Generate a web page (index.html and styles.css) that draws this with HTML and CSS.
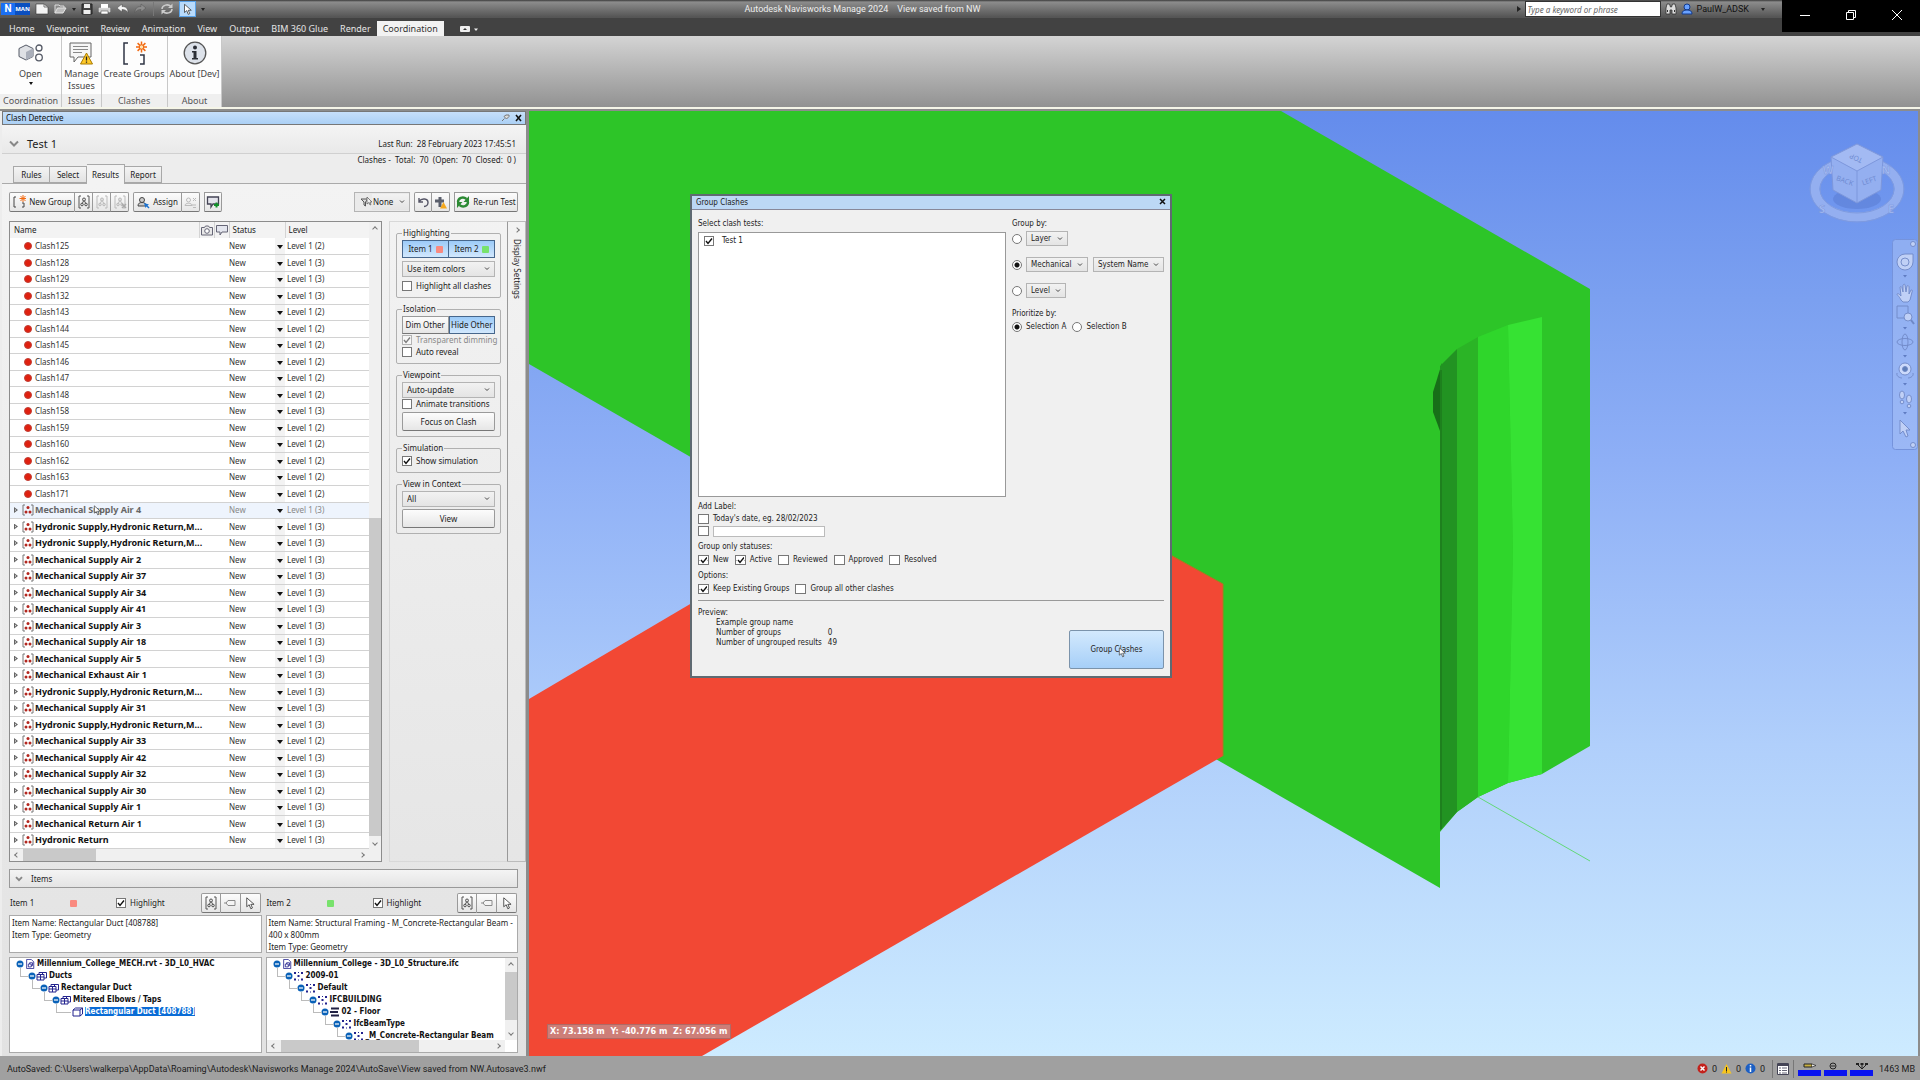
FILE: index.html
```html
<!DOCTYPE html>
<html lang="en">
<head>
    <meta charset="UTF-8">
    <meta name="viewport" content="width=device-width, initial-scale=1.0">
    <title>Autodesk Navisworks Manage 2024</title>
    <link rel="stylesheet" href="styles.css">
</head>
<body>
    <!-- icons used more than once -->
    <svg class="defs" width="0" height="0">
        <symbol id="i-group" viewBox="0 0 12 12">
            <path d="M3 1H1v10h2M9 1h2v10H9" fill="none" stroke="#777" stroke-width="1"/>
            <circle cx="6" cy="3.600" r="1.500" fill="#b3261e"/><circle cx="4" cy="8" r="1.500" fill="#b3261e"/><circle cx="8" cy="8" r="1.500" fill="#b3261e"/>
        </symbol>
        <symbol id="i-bracket" viewBox="0 0 14 14">
            <path d="M4 1H2v12h2M10 1h2v12h-2" fill="none" stroke="currentColor"/>
            <path d="M7 5L5 9M7 5l2 4" stroke="currentColor"/>
            <circle cx="7" cy="4.500" r="1.500" fill="#ddd" stroke="currentColor"/><circle cx="5" cy="9.500" r="1.300" fill="#ddd" stroke="currentColor"/><circle cx="9" cy="9.500" r="1.300" fill="#ddd" stroke="currentColor"/>
        </symbol>
        <symbol id="i-tag" viewBox="0 0 14 14">
            <path d="M5 4.500h7v5H5L3 7z" fill="#f4f4f4" stroke="#8a8a8a"/><path d="M1 7h3" stroke="#8a8a8a"/>
        </symbol>
        <symbol id="i-arrow" viewBox="0 0 12 16">
            <path d="M2 1v11l3-2.500 2 5 2-1-2-4.500h4z" fill="#fff" stroke="#333"/>
        </symbol>
        <symbol id="i-minus" viewBox="0 0 8 8">
            <circle cx="4" cy="4" r="3.500" fill="#0a62b8"/><path d="M2 4h4" stroke="#fff" stroke-width="1.200"/>
        </symbol>
        <symbol id="i-file" viewBox="0 0 10 12">
            <path d="M1 .5h5.500l3 3v8H1z" fill="#fff" stroke="#23238e"/><path d="M3 6h3.500v3.500H3zM4.500 6V4.500H8V8H6.500" fill="none" stroke="#23238e"/>
        </symbol>
        <symbol id="i-cubes" viewBox="0 0 12 10">
            <path d="M1 3.500h7v5.500H1zM1 6h7M4.500 3.500V9M3 3.500V1.500h7.500v5.500H8M6.500 1.500v2" fill="none" stroke="#23238e"/>
        </symbol>
        <symbol id="i-cube" viewBox="0 0 12 10">
            <path d="M1 3h7v6H1zM1 3l2.500-2h7L8 3M10.500 1v6L8 9" fill="#fff" stroke="#23238e"/>
        </symbol>
        <symbol id="i-dots" viewBox="0 0 12 10">
            <path d="M1 1h2v2H1zM8 1h2v2H8zM4.500 4h2v2h-2zM1 7.500h2v2H1zM8 7.500h2v2H8zM5 1h1v1H5zM5 8.500h1v1H5z" fill="#23238e"/>
        </symbol>
        <symbol id="i-floor" viewBox="0 0 12 10">
            <path d="M2 1.500h8M1 5h8M2 8.500h8" stroke="#222244" stroke-width="2"/>
        </symbol>
    </svg>

    <header class="titlebar">
        <div class="quick">
            <span class="logo"><b>N</b><i>MAN</i></span>
            <svg width="14" height="12" viewBox="0 0 14 12"><path d="M1 1h8l4 3v7H1z" fill="#f4f4f4" stroke="#333" stroke-width=".6"/><path d="M9 1v3h4" fill="none" stroke="#777"/></svg>
            <svg width="13" height="12" viewBox="0 0 13 12"><path d="M1 10V2h4l1 1h4v2" fill="#888" stroke="#ddd"/><path d="M1 10l2.500-5H12l-3 5z" fill="#bbb" stroke="#e4e4e4"/></svg>
            <span class="caret dark"></span>
            <svg width="12" height="12" viewBox="0 0 12 12"><path d="M1 1h10v10H1z" fill="#444" stroke="#222"/><path d="M3 1h6v4H3zM2.500 7h7v4h-7z" fill="#eee"/></svg>
            <svg width="13" height="12" viewBox="0 0 13 12"><path d="M3 1h7v4H3z" fill="#fff"/><path d="M1 5h11v4H1z" fill="#ccc" stroke="#eee" stroke-width=".5"/><path d="M3 8h7v3H3z" fill="#fff" stroke="#555" stroke-width=".6"/></svg>
            <svg width="13" height="12" viewBox="0 0 13 12"><path d="M6 1v2.500c4 0 6 2 6 6-1.500-2-3-3-6-3V9L1 5z" fill="#f4f4f4" stroke="#444" stroke-width=".5"/></svg>
            <svg width="13" height="12" viewBox="0 0 13 12"><path d="M7 1v2.500c-4 0-6 2-6 6 1.500-2 3-3 6-3V9l5-4z" fill="#8d8d8d" stroke="#555" stroke-width=".5"/></svg>
            <span class="vsep"></span>
            <svg width="14" height="12" viewBox="0 0 14 12"><path d="M2 6c0-4 6-5.500 9-2.500M12 6c0 4-6 5.500-9 2.500" fill="none" stroke="#ccc" stroke-width="1.500"/><path d="M12.500.5v4.500H8zM1.500 11.500V7H6z" fill="#ccc"/></svg>
            <span class="pick"><svg width="9" height="13" viewBox="0 0 12 16"><use href="#i-arrow"/></svg></span>
            <span class="caret dark"></span>
        </div>
        <div class="app-name">Autodesk Navisworks Manage 2024 &nbsp;&nbsp; View saved from NW</div>
        <div class="account">
            <span class="play"></span>
            <input type="text" class="search" placeholder="Type a keyword or phrase" aria-label="Search">
            <svg width="12" height="12" viewBox="0 0 12 12"><path d="M1 5l1-4h2.500l1 3h1l1-3H10l1 4v6H7V7H5v4H1z" fill="#ddd" stroke="#333" stroke-width=".8"/><path d="M2.500 7v2M9.500 7v2" stroke="#333"/></svg>
            <svg width="12" height="12" viewBox="0 0 12 12"><circle cx="6" cy="4" r="3" fill="#6aa2ff" stroke="#123a8c"/><path d="M1 11c0-3 2-4 5-4s5 1 5 4z" fill="#6aa2ff" stroke="#123a8c"/></svg>
            <span class="user">PaulW_ADSK</span>
            <span class="caret dark"></span>
        </div>
    </header>
    <nav class="tabs">
        <a href="#">Home</a>
        <a href="#">Viewpoint</a>
        <a href="#">Review</a>
        <a href="#">Animation</a>
        <a href="#">View</a>
        <a href="#">Output</a>
        <a href="#">BIM 360 Glue</a>
        <a href="#">Render</a>
        <a href="#" class="active">Coordination</a>
        <svg width="20" height="8" viewBox="0 0 20 8"><rect x="0" y="1" width="10" height="6" rx="1" fill="#eee"/><path d="M3 5l2-2 2 2z" fill="#333"/><path d="M14 3.500h4l-2 2.500z" fill="#eee"/></svg>
    </nav>
    <div class="win-btns">
        <button aria-label="Minimize"><svg width="12" height="12" viewBox="0 0 12 12"><path d="M1 6.500h10" stroke="#fff"/></svg></button>
        <button aria-label="Restore"><svg width="12" height="12" viewBox="0 0 12 12"><path d="M1.500 3.500h7v7h-7zM3.500 3.500v-2h7v7h-2" fill="none" stroke="#fff"/></svg></button>
        <button aria-label="Close"><svg width="12" height="12" viewBox="0 0 12 12"><path d="M1 1l10 10M11 1L1 11" stroke="#fff"/></svg></button>
    </div>

    <div class="ribbon">
        <div class="rgroup">
            <button>
                <svg width="26" height="24" viewBox="0 0 26 24"><path d="M8 4l7 3.500v8L8 19l-7-3.500v-8z" fill="#dfe1e5" stroke="#555a66"/><path d="M8 11v8l7-3.500v-8z" fill="#aaafba"/><circle cx="21" cy="7" r="3" fill="#fff" stroke="#555a66" stroke-width="1.300"/><circle cx="21" cy="16.500" r="3.300" fill="#fff" stroke="#555a66" stroke-width="1.300"/></svg>
                Open<span class="caret"></span>
            </button>
            <h6>Coordination</h6>
        </div>
        <div class="rgroup">
            <button>
                <svg width="26" height="24" viewBox="0 0 26 24"><path d="M2 2h21v14H10l-4 5v-5H2z" fill="#f6f6f6" stroke="#666"/><path d="M5 5.500h15M5 8.500h15M5 11.500h9" stroke="#888"/><path d="M18.500 12l6 11h-12z" fill="#ffc928" stroke="#a97b00"/><path d="M18.500 15.500v4M18.500 20.500v1.300" stroke="#222" stroke-width="1.300"/></svg>
                <span>Manage<br>Issues</span>
            </button>
            <h6>Issues</h6>
        </div>
        <div class="rgroup">
            <button>
                <svg width="26" height="24" viewBox="0 0 26 24"><path d="M7 2H3v21h4M19 14h4v9h-4" fill="none" stroke="#2f3544" stroke-width="1.500"/><path d="M20.500.5v11M15 6h11M16.600 2.100l7.800 7.800M24.400 2.100l-7.800 7.800" stroke="#f26a12" stroke-width="1.500"/><circle cx="20.500" cy="6" r="2.200" fill="#ffe3b0" stroke="#f26a12"/></svg>
                Create Groups
            </button>
            <h6>Clashes</h6>
        </div>
        <div class="rgroup">
            <button>
                <svg width="26" height="24" viewBox="0 0 26 24"><circle cx="13" cy="12" r="10.800" fill="#dde2ea" stroke="#555" stroke-width="1.300"/><circle cx="13" cy="6.500" r="2" fill="#2b2e35"/><path d="M10 10h4.500v7H16v1.500h-6V17h1.500v-5.500H10z" fill="#2b2e35"/></svg>
                About [Dev]
            </button>
            <h6>About</h6>
        </div>
    </div>

    <main>
        <section class="panel">
            <div class="panel-title">
                <span>Clash Detective</span>
                <svg width="22" height="8" viewBox="0 0 22 8"><path d="M1 7l2.500-2.500M3 2.500L5.500 5 8 2.500V1H5z" fill="#ddd" stroke="#777"/><path d="M15 1l5 6M20 1l-5 6" stroke="#111" stroke-width="1.600"/></svg>
            </div>
            <div class="test-head">
                <svg width="10" height="8" viewBox="0 0 10 8"><path d="M1 1.500l4 4 4-4" fill="none" stroke="#888" stroke-width="2"/></svg>
                <span class="test-name">Test 1</span>
                <span class="last-run">Last Run: &nbsp;28 February 2023 17:45:51</span>
            </div>
            <div class="sum">Clashes - &nbsp;Total: &nbsp;70 &nbsp;(Open: &nbsp;70 &nbsp;Closed: &nbsp;0 )</div>
            <div class="ptabs">
                <button>Rules</button><button>Select</button><button class="active">Results</button><button>Report</button>
            </div>
            <div class="pbody">
                <div class="toolbar">
                    <div class="bgroup">
                        <button class="b-new"><svg width="14" height="14" viewBox="0 0 14 14"><path d="M4 2H2v10h2M10 8h2v4h-2" fill="none" stroke="#444"/><path d="M11 0v7M7.500 3.500h7M8.500 1l5 5M13.500 1l-5 5" stroke="#f26a12"/></svg>New Group</button>
                        <button class="ico" aria-label="Group"><svg width="14" height="14"><use href="#i-bracket"/></svg></button>
                        <button class="ico dim" aria-label="Add to group"><svg width="14" height="14"><use href="#i-bracket"/></svg></button>
                        <button class="ico dim" aria-label="Remove from group"><svg width="14" height="14" viewBox="0 0 14 14"><use href="#i-bracket"/><path d="M9 9l4 4M13 9l-4 4" stroke="#aaa" stroke-width="1.500"/></svg></button>
                    </div>
                    <div class="bgroup">
                        <button class="b-assign"><svg width="13" height="13" viewBox="0 0 13 13"><circle cx="5" cy="4" r="2.500" fill="#ccc" stroke="#444"/><path d="M1 10c0-3 2-3.500 4-3.500S9 7 9 10z" fill="#ccc" stroke="#444"/><path d="M7 7l1.500 5 1-1.500 2 2 1-1-2-2L12 8.500z" fill="#1b72d0"/></svg>Assign</button>
                        <button class="ico dim" aria-label="Unassign"><svg width="13" height="13" viewBox="0 0 13 13"><circle cx="4.500" cy="4" r="2" fill="none" stroke="currentColor"/><path d="M1 9.500c0-3 7-3 7 0zM9 2l3 3M12 2L9 5M8 9h4M9 11.500h3" fill="none" stroke="currentColor"/></svg></button>
                    </div>
                    <div class="bgroup">
                        <button class="ico" aria-label="Add comment"><svg width="14" height="14" viewBox="0 0 14 14"><path d="M1.500 2h11v7H7l-2 3V9H1.500z" fill="#e4e4ec" stroke="#445" stroke-width="1.300"/><path d="M10.500 7.500v5M8 10h5" stroke="#13912b" stroke-width="2"/></svg></button>
                    </div>
                    <span class="grow"></span>
                    <div class="filter">
                        <svg width="12" height="12" viewBox="0 0 12 12"><path d="M1 3h7L5.500 6v4L4 9V6z" fill="#ddd" stroke="#555"/><path d="M7 1v7l2-1.500L10 9l1-.5-1-2.500h2z" fill="#eee" stroke="#555" stroke-width=".7"/></svg>
                        <select aria-label="Filter"><option>None</option></select>
                    </div>
                    <div class="bgroup">
                        <button class="ico" aria-label="Reset"><svg width="13" height="13" viewBox="0 0 13 13"><path d="M2 2v4h4M2 5.500c3-4 9-3 9 1 0 2-1.500 4-4 4" fill="none" stroke="#556" stroke-width="1.400"/></svg></button>
                        <button class="ico" aria-label="Compact"><svg width="13" height="13" viewBox="0 0 13 13"><path d="M6 1v10M1 5h9" stroke="#5a5f6c" stroke-width="3"/><path d="M9.500 6l3.500 6.500H6z" fill="#f5a81c"/></svg></button>
                    </div>
                    <div class="bgroup">
                        <button class="b-rerun"><svg width="14" height="14" viewBox="0 0 14 14"><path d="M2 7c0-4 5-6 8.500-3M12 7c0 4-5 6-8.500 3" fill="none" stroke="#2c8a34" stroke-width="2.400"/><path d="M13 1v6H7.500zM1 13V7h5.500z" fill="#2c8a34"/></svg>Re-run Test</button>
                    </div>
                </div>

                <div class="work">
                    <div class="grid">
                        <div class="grid-main">
                            <table>
                                <thead>
                                    <tr>
                                        <th class="c-name">Name</th>
                                        <th class="c-ico"><svg width="12" height="11" viewBox="0 0 12 11"><path d="M.5 2.500h3l1-1.500h3l1 1.500h3v7.500H.5z" fill="#e8e8e8" stroke="#667"/><circle cx="6" cy="6" r="2.300" fill="#fff" stroke="#667"/></svg></th>
                                        <th class="c-ico"><svg width="12" height="11" viewBox="0 0 12 11"><path d="M.5.5h11v6.500H6L4 10V7H.5z" fill="#e4e6ee" stroke="#667"/></svg></th>
                                        <th class="c-status">Status</th>
                                        <th class="c-dd"></th>
                                        <th class="c-level">Level</th>
                                    </tr>
                                </thead>
                                <tbody id="rows"></tbody>
                            </table>
                            <div class="hbar"><span class="chev left"></span><i></i><span class="chev right"></span></div>
                        </div>
                        <div class="vbar"><span class="chev up"></span><i></i><span class="chev down"></span></div>
                    </div>

                    <div class="options">
                        <fieldset>
                            <legend>Highlighting</legend>
                            <div class="pair"><button class="on">Item 1 <i class="sw red"></i></button><button class="on">Item 2 <i class="sw green"></i></button></div>
                            <select aria-label="Colors"><option>Use item colors</option></select>
                            <label class="last"><input type="checkbox">Highlight all clashes</label>
                        </fieldset>
                        <fieldset>
                            <legend>Isolation</legend>
                            <div class="pair"><button>Dim Other</button><button class="on">Hide Other</button></div>
                            <label class="off"><input type="checkbox" checked disabled>Transparent dimming</label>
                            <label><input type="checkbox">Auto reveal</label>
                        </fieldset>
                        <fieldset>
                            <legend>Viewpoint</legend>
                            <select aria-label="Viewpoint"><option>Auto-update</option></select>
                            <label><input type="checkbox">Animate transitions</label>
                            <button class="wide">Focus on Clash</button>
                        </fieldset>
                        <fieldset>
                            <legend>Simulation</legend>
                            <label><input type="checkbox" checked>Show simulation</label>
                        </fieldset>
                        <fieldset>
                            <legend>View in Context</legend>
                            <select aria-label="Context"><option>All</option></select>
                            <button class="wide">View</button>
                        </fieldset>
                    </div>
                    <div class="side-tab"><span class="chev right"></span><span class="vert">Display Settings</span></div>
                </div>

                <div class="items-head"><svg width="8" height="6" viewBox="0 0 10 8"><path d="M1 1.500l4 4 4-4" fill="none" stroke="#888" stroke-width="2.500"/></svg>Items</div>
                <div class="items">
                    <div class="item">
                        <div class="item-bar">
                            <span class="nm">Item 1</span><i class="sw red"></i>
                            <label><input type="checkbox" checked>Highlight</label>
                            <div class="bgroup">
                                <button class="ico" aria-label="Group"><svg width="14" height="14"><use href="#i-bracket"/></svg></button>
                                <button class="ico" aria-label="Back"><svg width="14" height="14"><use href="#i-tag"/></svg></button>
                                <button class="ico" aria-label="Select"><svg width="10" height="13"><use href="#i-arrow"/></svg></button>
                            </div>
                        </div>
                        <div class="info">Item Name: Rectangular Duct [408788]<br>Item Type: Geometry</div>
                        <div class="treebox">
                            <ul class="tree">
                                <li><svg class="m"><use href="#i-minus"/></svg><svg><use href="#i-file"/></svg>Millennium_College_MECH.rvt - 3D_L0_HVAC
                                <ul><li><svg class="m"><use href="#i-minus"/></svg><svg><use href="#i-cubes"/></svg>Ducts
                                <ul><li><svg class="m"><use href="#i-minus"/></svg><svg><use href="#i-cubes"/></svg>Rectangular Duct
                                <ul><li><svg class="m"><use href="#i-minus"/></svg><svg><use href="#i-cubes"/></svg>Mitered Elbows / Taps
                                <ul><li class="leaf"><svg><use href="#i-cube"/></svg><span class="sel">Rectangular Duct [408788]</span></li></ul>
                                </li></ul></li></ul></li></ul></li>
                            </ul>
                        </div>
                    </div>
                    <div class="item">
                        <div class="item-bar">
                            <span class="nm">Item 2</span><i class="sw green"></i>
                            <label><input type="checkbox" checked>Highlight</label>
                            <div class="bgroup">
                                <button class="ico" aria-label="Group"><svg width="14" height="14"><use href="#i-bracket"/></svg></button>
                                <button class="ico" aria-label="Back"><svg width="14" height="14"><use href="#i-tag"/></svg></button>
                                <button class="ico" aria-label="Select"><svg width="10" height="13"><use href="#i-arrow"/></svg></button>
                            </div>
                        </div>
                        <div class="info">Item Name: Structural Framing - M_Concrete-Rectangular Beam - 400 x 800mm<br>Item Type: Geometry</div>
                        <div class="treebox scroll">
                            <ul class="tree">
                                <li><svg class="m"><use href="#i-minus"/></svg><svg><use href="#i-file"/></svg>Millennium_College - 3D_L0_Structure.ifc
                                <ul><li><svg class="m"><use href="#i-minus"/></svg><svg><use href="#i-dots"/></svg>2009-01
                                <ul><li><svg class="m"><use href="#i-minus"/></svg><svg><use href="#i-dots"/></svg>Default
                                <ul><li><svg class="m"><use href="#i-minus"/></svg><svg><use href="#i-dots"/></svg>IFCBUILDING
                                <ul><li><svg class="m"><use href="#i-minus"/></svg><svg><use href="#i-floor"/></svg>02 - Floor
                                <ul><li><svg class="m"><use href="#i-minus"/></svg><svg><use href="#i-dots"/></svg>IfcBeamType
                                <ul><li><svg class="m"><use href="#i-minus"/></svg><svg><use href="#i-dots"/></svg>_M_Concrete-Rectangular Beam</li></ul>
                                </li></ul></li></ul></li></ul></li></ul></li></ul></li>
                            </ul>
                            <div class="vbar"><span class="chev up"></span><i></i><span class="chev down"></span></div>
                            <div class="hbar"><span class="chev left"></span><i></i><span class="chev right"></span></div>
                        </div>
                    </div>
                </div>
            </div>
        </section>

        <section class="view">
            <svg class="scene" viewBox="529 111 1389 945" preserveAspectRatio="xMinYMin slice">
                <path d="M529 111H1281L1590 289V746L1542 774L1508 783L1478 797L1457 812L1440 832V888L529 364z" fill="#2dc528"/>
                <path d="M1442 363V431L1440 431L1433 412V392z" fill="#176f18"/>
                <path d="M1440 366L1457 349V812L1440 831z" fill="#229322"/>
                <path d="M1441 370V829" stroke="#1a6e1a"/>
                <path d="M1457 349L1478 337V797L1457 812z" fill="#2bb426"/>
                <path d="M1478 337L1508 325L1513 550L1508 783L1478 797z" fill="#2fd62b"/>
                <path d="M1508 325L1542 317V774L1508 783L1513 550z" fill="#36e233"/>
                <path d="M1478 797L1590 861" stroke="#62d878" stroke-width="1"/>
                <path d="M529 699L967 441L1223 584V756L702 1056H529z" fill="#f24834"/>
                <path d="M1172 556L1223 584V756" fill="none" stroke="#b0761f"/>
            </svg>

            <svg class="viewcube" width="100" height="86" viewBox="0 0 100 86">
                <ellipse cx="50" cy="50" rx="42" ry="28" fill="none" stroke="#94aff0" stroke-width="9"/>
                <ellipse cx="50" cy="50" rx="47" ry="33" fill="none" stroke="#7f9be0"/>
                <ellipse cx="50" cy="50" rx="37" ry="24" fill="none" stroke="#7f9be0"/>
                <ellipse cx="50" cy="60" rx="24" ry="10" fill="#5c7fd6" opacity=".6"/>
                <path d="M50 5l26 13-2 33-24 13-24-13-2-33z" fill="#94aff0" stroke="#7d97dc"/>
                <path d="M50 5l26 13-26 14-26-14z" fill="#a3baf3" stroke="#7d97dc"/>
                <path d="M50 32v32" stroke="#7d97dc"/>
                <text x="37" y="44" transform="rotate(20 37 44)">BACK</text>
                <text x="63" y="44" transform="rotate(-20 63 44)">LEFT</text>
                <text x="50" y="17" transform="rotate(205 50 17)">TOP</text>
                <g class="dirs"><text x="21" y="35">W</text><text x="79" y="35">N</text><text x="15" y="74">S</text><text x="84" y="74">E</text></g>
            </svg>

            <svg class="navbar" width="26" height="211" viewBox="0 0 26 211">
                <rect x=".5" y=".5" width="25" height="210" rx="3" fill="#a9c2f6" fill-opacity=".5" stroke="#7593dc"/>
                <g fill="#c0d0f6" stroke="#6f88c6" stroke-width=".9">
                    <circle cx="21" cy="5" r="2.500"/><circle cx="21" cy="206" r="2.500"/>
                    <path d="M13 15h8v8a8 8 0 1 1-8-8z"/><circle cx="13" cy="23" r="4"/>
                    <path d="M9 61c-2-4-4-5-4-6 1-1 2 0 4 2l-1-9c1-1 2 0 2 1l1 4V46c1-1 2-1 2 0l1 7 1-6c1-1 2 0 2 1v7l2-4c1 0 2 0 1 2l-2 8-2 2H11z"/>
                    <path d="M5 67h11v12H5z" fill="none"/><circle cx="16" cy="78" r="4"/><path d="M19 81l3 4" stroke-width="2"/>
                    <ellipse cx="13" cy="103" rx="8" ry="3.500" fill="none"/><ellipse cx="13" cy="103" rx="3" ry="8" fill="none"/>
                    <circle cx="13" cy="130" r="6" fill="#ccdafb"/><circle cx="13" cy="130" r="2.500" fill="#5f7fb8"/><path d="M5 134c-1 4 4 5 5 5M21 134c1 4-4 5-5 5" fill="none"/>
                    <ellipse cx="10" cy="156" rx="2.500" ry="4"/><circle cx="10" cy="163" r="1.800"/><ellipse cx="17" cy="160" rx="2.500" ry="4"/><circle cx="17" cy="167" r="1.800"/>
                    <path d="M8 181v14l3-3 3 6 2-1-2-6h4z"/>
                </g>
                <path d="M11 36h4l-2 2.500zM11 88h4l-2 2.500zM11 116h4l-2 2.500zM11 144h4l-2 2.500zM11 173h4l-2 2.500z" fill="#5f7cc2"/>
            </svg>

            <div class="coords">X: 73.158 m &nbsp;Y: -40.776 m &nbsp;Z: 67.056 m</div>

            <form class="dialog" onsubmit="return false">
                <div class="dlg-title">Group Clashes<button aria-label="Close"><svg width="7" height="7" viewBox="0 0 7 7"><path d="M1 1l5 5M6 1L1 6" stroke="#111" stroke-width="1.500"/></svg></button></div>
                <div class="dlg-body">
                    <div class="dlg-top">
                        <div class="tests">
                            <p>Select clash tests:</p>
                            <div class="testlist"><label><input type="checkbox" checked>Test 1</label></div>
                        </div>
                        <div class="by">
                            <p>Group by:</p>
                            <div class="by-row"><input type="radio" name="by" aria-label="Group by layer"><select class="s-layer" aria-label="Layer"><option>Layer</option></select></div>
                            <div class="by-row"><input type="radio" name="by" checked aria-label="Group by mechanical"><select class="s-mech" aria-label="Mechanical"><option>Mechanical</option></select><select class="s-sys" aria-label="System"><option>System Name</option></select></div>
                            <div class="by-row"><input type="radio" name="by" aria-label="Group by level"><select class="s-level" aria-label="Level"><option>Level</option></select></div>
                            <p>Prioritize by:</p>
                            <div class="prio"><label><input type="radio" name="prio" checked>Selection A</label><label><input type="radio" name="prio">Selection B</label></div>
                        </div>
                    </div>
                    <p>Add Label:</p>
                    <div class="checks tight"><label><input type="checkbox">Today's date, eg. 28/02/2023</label></div>
                    <div class="checks tight"><input type="checkbox" aria-label="Use custom label"><input type="text" class="custom" aria-label="Custom label"></div>
                    <p class="sp">Group only statuses:</p>
                    <div class="checks">
                        <label><input type="checkbox" checked>New</label>
                        <label><input type="checkbox" checked>Active</label>
                        <label><input type="checkbox">Reviewed</label>
                        <label><input type="checkbox">Approved</label>
                        <label><input type="checkbox">Resolved</label>
                    </div>
                    <p class="sp">Options:</p>
                    <div class="checks">
                        <label><input type="checkbox" checked>Keep Existing Groups</label>
                        <label><input type="checkbox">Group all other clashes</label>
                    </div>
                    <hr>
                    <div class="dlg-bottom">
                        <div>
                            <p>Preview:</p>
                            <dl><dt>Example group name</dt><dd></dd><dt>Number of groups</dt><dd>0</dd><dt>Number of ungrouped results</dt><dd>49</dd></dl>
                        </div>
                        <button class="go">Group Clashes</button>
                    </div>
                </div>
                <svg class="cursor in-dialog" width="8" height="11"><use href="#i-arrow"/></svg>
            </form>
        </section>
    </main>

    <footer>
        <span class="saved">AutoSaved: C:\Users\walkerpa\AppData\Roaming\Autodesk\Navisworks Manage 2024\AutoSave\View saved from NW.Autosave3.nwf</span>
        <svg width="11" height="11" viewBox="0 0 11 11"><circle cx="5.500" cy="5.500" r="5" fill="#c3221c"/><path d="M3.500 3.500l4 4M7.500 3.500l-4 4" stroke="#fff" stroke-width="1.500"/></svg><span class="n">0</span>
        <svg width="11" height="11" viewBox="0 0 11 11"><path d="M5.500 1l5 9.500H.5z" fill="#f8c51c"/><path d="M5.500 4v4M5.500 8.500v1" stroke="#222"/></svg><span class="n">0</span>
        <svg width="11" height="11" viewBox="0 0 11 11"><circle cx="5.500" cy="5.500" r="5" fill="#1c5fc4"/><path d="M5.500 2v1.500M5.500 4.500v4.500" stroke="#fff" stroke-width="1.500"/></svg><span class="n">0</span>
        <span class="fsep"></span>
        <svg width="12" height="12" viewBox="0 0 12 12"><path d="M.5.5h11v11H.5z" fill="#fff" stroke="#445"/><path d="M.5 2h11" stroke="#445" stroke-width="2"/><path d="M2 5h2M5 5h5M2 7.500h2M5 7.500h5M2 10h2M5 10h5" stroke="#667"/></svg>
        <span class="fsep"></span>
        <svg class="meter" width="23" height="14" viewBox="0 0 23 14"><path d="M6 2h8v3H6z" fill="#c8b040" stroke="#222"/><path d="M14 2l4 1.500L14 5" fill="#eee" stroke="#222" stroke-width=".7"/><path d="M0 8h23v6H0z" fill="#0a14f0"/></svg>
        <svg class="meter" width="23" height="14" viewBox="0 0 23 14"><circle cx="9" cy="4" r="3" fill="none" stroke="#222"/><path d="M7 4h4" stroke="#222"/><path d="M0 8h23v6H0z" fill="#0a14f0"/></svg>
        <svg class="meter" width="23" height="14" viewBox="0 0 23 14"><path d="M6 1h3v2H6zM10.500 1h3v2h-3zM15 1h3v2h-3z" fill="#222"/><path d="M8 3l4 4 4-4M12 3v4" fill="none" stroke="#222"/><path d="M0 8h23v6H0z" fill="#0a14f0"/></svg>
        <span class="mem">1463 MB</span>
    </footer>

    <script>
        // name, level count; rows starting with "Clash" are single clashes, the rest are groups
        var rows = [
            ["Clash125", 2], ["Clash128", 3], ["Clash129", 3], ["Clash132", 3], ["Clash143", 2], ["Clash144", 2],
            ["Clash145", 2], ["Clash146", 2], ["Clash147", 2], ["Clash148", 2], ["Clash158", 3], ["Clash159", 2],
            ["Clash160", 2], ["Clash162", 2], ["Clash163", 2], ["Clash171", 2],
            ["Mechanical Supply Air 4", 3], ["Hydronic Supply,Hydronic Return,M...", 3], ["Hydronic Supply,Hydronic Return,M...", 3],
            ["Mechanical Supply Air 2", 3], ["Mechanical Supply Air 37", 3], ["Mechanical Supply Air 34", 3],
            ["Mechanical Supply Air 41", 3], ["Mechanical Supply Air 3", 3], ["Mechanical Supply Air 18", 3],
            ["Mechanical Supply Air 5", 3], ["Mechanical Exhaust Air 1", 3], ["Hydronic Supply,Hydronic Return,M...", 3],
            ["Mechanical Supply Air 31", 3], ["Hydronic Supply,Hydronic Return,M...", 3], ["Mechanical Supply Air 33", 2],
            ["Mechanical Supply Air 42", 3], ["Mechanical Supply Air 32", 3], ["Mechanical Supply Air 30", 2],
            ["Mechanical Supply Air 1", 3], ["Mechanical Return Air 1", 3], ["Hydronic Return", 3]
        ];
        var html = "";
        for (var i = 0; i < rows.length; i++) {
            var single = rows[i][0].indexOf("Clash") == 0;
            var cls = single ? "clash" : "group";
            if (i == 16) cls += " hover";
            html += '<tr class="' + cls + '"><td colspan="3"><div class="nm">';
            html += single ? '<i class="dot"></i>' : '<i class="exp"></i><svg width="12" height="12"><use href="#i-group"/></svg>';
            html += rows[i][0];
            if (i == 16) html += '<svg class="cursor in-row" width="8" height="11"><use href="#i-arrow"/></svg>';
            html += '</div></td><td>New</td><td class="dd"><span class="caret"></span></td><td>Level 1 (' + rows[i][1] + ')</td></tr>';
        }
        document.getElementById("rows").innerHTML = html;
    </script>
</body>
</html>
```
FILE: styles.css
```css
*{
    box-sizing: border-box;
    margin: 0;
    padding: 0;
}
body{
    height: 100vh;
    display: flex;
    flex-direction: column;
    overflow: hidden;
    font-family: "Noto Sans", sans-serif;
    font-size: 9px;
    line-height: 12px;
    color: #222;
    background: #999;
    position: relative;
}
button, input, select{
    font: inherit;
    color: inherit;
}
svg{
    flex: none;
}
li{
    list-style: none;
}
.defs{
    position: absolute;
}
.grow{
    flex: 1;
}
.caret{
    display: inline-block;
    border: 3px solid transparent;
    border-top: 4px solid #111;
    border-bottom: 0;
}
.caret.dark{
    border-width: 3px 2px 0;
    border-top-color: #222;
}

/* title bar */
.titlebar{
    height: 18px;
    padding-right: 138px;
    display: flex;
    align-items: center;
    justify-content: space-between;
    font-family: Roboto, sans-serif;
    background: linear-gradient(#3a3a3a 0, #8c8c8c 2px, #555 17px);
}
.quick, .account{
    flex: 1;
    display: flex;
    align-items: center;
    height: 16px;
}
.quick{
    gap: 5px;
}
.logo{
    display: flex;
    width: 29px;
    height: 12px;
    margin-left: 1px;
    line-height: 12px;
    color: #fff;
    background: #1b6ff2;
}
.logo b{
    width: 14px;
    text-align: center;
    font-size: 10px;
}
.logo i{
    flex: 1;
    font: bold 6px/12px "Noto Sans", sans-serif;
    text-align: center;
    background: #0b4fc0;
}
.vsep{
    width: 1px;
    height: 14px;
    margin: 0 1px;
    background: #777;
}
.pick{
    display: flex;
    align-items: center;
    justify-content: center;
    width: 17px;
    height: 16px;
    background: #b9dbfb;
    border: 1px solid #5ba3e8;
}
.app-name{
    margin-right: 40px;
    color: #eee;
}
.account{
    justify-content: flex-end;
    gap: 4px;
    padding-right: 17px;
    color: #111;
}
.user{
    margin-right: 8px;
}
.play{
    border: 3px solid transparent;
    border-left: 4px solid #222;
    border-right: 0;
}
.search{
    width: 136px;
    height: 16px;
    padding: 0 2px;
    border: 1px solid #333;
    background: #fff;
    font-family: "Noto Sans", sans-serif;
    font-size: 8px;
    font-style: italic;
}
.search::placeholder{
    color: #666;
}
.win-btns{
    position: absolute;
    top: 0;
    right: 0;
    display: flex;
    width: 138px;
    height: 32px;
    background: #000;
}
.win-btns button{
    flex: 1;
    border: 0;
    background: none;
}

/* tabs and ribbon */
.tabs{
    height: 18px;
    padding: 3px 0 0 3px;
    display: flex;
    align-items: center;
    background: #424242;
}
.tabs a{
    padding: 0 6px;
    line-height: 15px;
    color: #e6e6e6;
    text-decoration: none;
}
.tabs .active{
    background: #f2f2f2;
    color: #333;
}
.tabs svg{
    margin-left: 16px;
}
.ribbon{
    height: 75px;
    padding-bottom: 3px;
    display: flex;
    background: linear-gradient(#d4d4d4, #929292 71px, #f5f5e8 71px, #f5f5e8 73px, #8c8c8c 73px);
}
.rgroup{
    display: flex;
    flex-direction: column;
    height: 71px;
    background: #fdfdfd;
    border-right: 1px solid #c8c8c8;
}
.rgroup button{
    flex: 1;
    padding: 5px 2px 0;
    display: flex;
    flex-direction: column;
    align-items: center;
    border: 0;
    background: none;
    color: #444;
}
.rgroup button svg{
    margin-bottom: 3px;
}
.rgroup .caret{
    margin-top: 2px;
    border-width: 3px 2px 0;
}
.rgroup h6{
    height: 13px;
    padding: 0 3px;
    font: inherit;
    line-height: 14px;
    text-align: center;
    color: #555;
    background: #efefef;
}

/* left panel */
main{
    flex: 1;
    min-height: 0;
    display: flex;
}
.panel{
    width: 529px;
    display: flex;
    flex-direction: column;
    padding-left: 2px;
    border-right: 3px solid #8c8c8c;
    font-size: 8px;
    background: #ededed;
}
.panel-title{
    height: 14px;
    padding: 0 2px 0 3px;
    display: flex;
    align-items: center;
    justify-content: space-between;
    background: linear-gradient(#c6dffa, #abd0f5);
    border: 1px solid #777;
    color: #111;
}
.test-head{
    height: 29px;
    padding: 9px 10px 0 7px;
    display: flex;
    align-items: center;
    border-bottom: 1px solid #d0d0d0;
    background: linear-gradient(#f4f4f4, #e9e9e9);
}
.test-name{
    flex: 1;
    padding-left: 8px;
    font-size: 11px;
}
.sum{
    height: 13px;
    padding-right: 10px;
    text-align: right;
}
.ptabs{
    display: flex;
    align-items: flex-end;
    height: 17px;
    padding-left: 11px;
    border-bottom: 1px solid #aaa;
}
.ptabs button{
    min-width: 37px;
    height: 17px;
    padding: 0 5px;
    border: 1px solid #a8a8a8;
    border-left-width: 0;
    background: linear-gradient(#f4f4f4, #e2e2e2);
}
.ptabs button:first-child{
    border-left-width: 1px;
}
.ptabs .active{
    height: 20px;
    margin-bottom: -1px;
    border-bottom: 0;
    background: #f3f3f3;
}
.pbody{
    flex: 1;
    min-height: 0;
    display: flex;
    flex-direction: column;
    padding: 8px 8px 3px 7px;
    background: linear-gradient(#f3f3f3, #e2e2e2);
}
.toolbar{
    display: flex;
    align-items: center;
    gap: 4px;
    height: 20px;
    margin-bottom: 9px;
}
.bgroup{
    display: flex;
    height: 20px;
}
.bgroup button, .pair button, .wide{
    display: flex;
    align-items: center;
    justify-content: center;
    gap: 3px;
    white-space: nowrap;
    border: 1px solid #9a9a9a;
    border-bottom-color: #777;
    background: linear-gradient(#fcfcfc, #e6e6e6);
}
.bgroup button + button{
    border-left: 0;
}
.bgroup button:first-child{
    border-radius: 2px 0 0 2px;
}
.bgroup button:last-child{
    border-radius: 0 2px 2px 0;
}
.bgroup .ico{
    width: 18px;
    color: #555;
}
.bgroup .dim{
    color: #bbb;
}
.b-new{
    width: 66px;
}
.b-assign{
    width: 49px;
}
.b-rerun{
    width: 64px;
}
select{
    height: 16px;
    padding: 0 14px 0 4px;
    appearance: none;
    border: 1px solid #b4b4b4;
    border-radius: 0;
    background: url("data:image/svg+xml,%3Csvg xmlns='http://www.w3.org/2000/svg' width='6' height='4'%3E%3Cpath d='M1 .5l2 2 2-2' fill='none' stroke='%23444'/%3E%3C/svg%3E") no-repeat right 4px center, linear-gradient(#f2f2f2, #e4e4e4);
    color: #222;
}
.filter{
    display: flex;
    align-items: center;
    width: 56px;
    height: 20px;
    padding-left: 5px;
    border: 1px solid #b4b4b4;
    background: #eaeaea;
}
.filter select{
    flex: 1;
    padding-left: 1px;
    border: 0;
    background-color: transparent;
}
.work{
    flex: 1;
    min-height: 0;
    display: flex;
    margin-right: -8px;
}

/* result table */
.grid{
    flex: none;
    display: flex;
    width: 373px;
    border: 1px solid #8c8c8c;
    background: #f0f0f0;
}
.grid-main{
    flex: 1;
    min-width: 0;
    display: flex;
    flex-direction: column;
    justify-content: space-between;
}
table{
    width: 100%;
    table-layout: fixed;
    border-collapse: collapse;
    background: #fff;
}
th{
    height: 16px;
    padding-left: 3px;
    text-align: left;
    font-weight: normal;
    border-left: 1px solid #d4d4d4;
    background: #f3f3f3;
}
th:first-child{
    padding-left: 4px;
    border-left: 0;
}
th svg{
    display: block;
}
.c-ico{
    width: 15px;
    padding-left: 1px;
}
.c-status{
    width: 46px;
}
.c-dd{
    width: 10px;
    border-left: 0;
}
.c-level{
    width: 84px;
}
td{
    height: 16px;
    line-height: 14px;
    vertical-align: middle;
    border-bottom: 1px solid #d2d2d2;
    color: #333;
}
tr:nth-child(even) td{
    height: 17px;
}
td:last-child{
    padding-left: 2px;
}
td .nm{
    position: relative;
    display: flex;
    align-items: center;
}
.dot{
    width: 8px;
    height: 8px;
    margin: 0 3px 0 14px;
    border-radius: 4px;
    background: #e0200f;
    border: 1px solid #c04036;
}
.group .nm{
    font-size: 9px;
    font-weight: bold;
    color: #111;
}
.group svg{
    margin-right: 1px;
}
.exp{
    width: 4px;
    height: 6px;
    margin: 0 4px;
    background: #666;
    clip-path: path("M0 0L4 3L0 6z M1 2V4L2 3z");
}
.hover td{
    background: #eef4fd;
    color: #888;
}
.hover .nm{
    color: #666;
}
.dd{
    text-align: center;
    line-height: 6px;
    background: #f3f3f3;
}
.dd .caret{
    border-width: 4px 3px 0;
}
.cursor{
    position: absolute;
}
.in-row{
    left: 83px;
    top: 2px;
}
.in-dialog{
    left: 426px;
    top: 451px;
}
.vbar, .hbar{
    display: flex;
    align-items: center;
    justify-content: space-between;
    background: #f0f0f0;
}
.vbar{
    flex-direction: column;
    width: 12px;
    padding: 5px 0;
}
.hbar{
    height: 12px;
    padding: 0 5px;
}
.vbar i{
    width: 12px;
    background: #c9c9c9;
}
.hbar i{
    height: 12px;
    background: #c9c9c9;
}
.grid .vbar{
    padding-bottom: 16px;
}
.grid .vbar i{
    height: 318px;
    margin: auto 0 5px;
}
.grid .hbar i{
    width: 73px;
    margin: 0 auto 0 4px;
}
.chev{
    width: 4px;
    height: 4px;
    border: solid #777;
    border-width: 1px 1px 0 0;
}
.up{ transform: rotate(-45deg); }
.down{ transform: rotate(135deg); }
.left{ transform: rotate(-135deg); }
.right{ transform: rotate(45deg); }

/* display settings */
.options{
    flex: 1;
    min-width: 0;
    margin-left: 7px;
    padding: 6px 6px 0;
    display: flex;
    flex-direction: column;
    gap: 6px;
    border: 1px solid #d8d8d8;
    border-right-color: #999;
}
fieldset{
    display: block;
    min-width: 0;
    padding: 2px 5px 5px;
    border: 1px solid #b0b0b0;
    border-radius: 2px;
}
legend{
    height: 10px;
    padding: 0 1px;
    line-height: 10px;
}
.pair{
    display: flex;
}
.pair button{
    flex: 1;
    height: 18px;
}
.pair .on{
    background: linear-gradient(#9ccbf8, #d2e8fd);
    border-color: #47678c;
}
.pair .on + .on{
    border-left: 0;
}
.sw{
    width: 7px;
    height: 7px;
    border-radius: 1px;
}
.sw.red{
    background: #f98a80;
}
.sw.green{
    background: #78e26c;
}
fieldset select{
    display: block;
    width: 100%;
}
.pair + select{
    margin-top: 3px;
}
fieldset label{
    display: flex;
    align-items: center;
    height: 12px;
    white-space: nowrap;
}
fieldset .last{
    margin-top: 3px;
}
.off{
    color: #888;
}
.wide{
    width: 100%;
    height: 19px;
    margin-top: 2px;
    border-radius: 2px;
}
input[type=checkbox], input[type=radio]{
    flex: none;
    appearance: none;
    width: 10px;
    height: 10px;
    margin-right: 4px;
    border: 1px solid #777;
    background: #fff;
}
input[type=checkbox]:checked{
    background: #fff url("data:image/svg+xml,%3Csvg xmlns='http://www.w3.org/2000/svg' viewBox='0 0 8 8'%3E%3Cpath d='M1 4l2 2.500L7 1.500' fill='none' stroke='%23111' stroke-width='1.400'/%3E%3C/svg%3E") center / 8px 8px;
}
input[type=checkbox]:disabled{
    opacity: .5;
}
input[type=radio]{
    border-radius: 5px;
}
input[type=radio]:checked{
    background: radial-gradient(#111 0, #111 2px, #fff 3px);
}
.side-tab{
    width: 18px;
    display: flex;
    flex-direction: column;
    align-items: center;
    gap: 7px;
    padding-top: 6px;
    border: 1px solid #bbb;
    border-left: 0;
}
.vert{
    writing-mode: vertical-rl;
    white-space: nowrap;
}

/* items */
.items-head{
    height: 19px;
    margin: 7px 0 5px;
    padding-left: 5px;
    display: flex;
    align-items: center;
    gap: 8px;
    border: 1px solid #999;
    background: linear-gradient(#f4f4f4, #e4e4e4);
}
.items{
    display: grid;
    grid-template-columns: 1fr 1fr;
    gap: 4px;
}
.item{
    min-width: 0;
}
.item-bar{
    display: flex;
    align-items: center;
    height: 20px;
    margin-bottom: 2px;
    padding: 0 1px;
}
.item-bar .nm{
    width: 60px;
}
.item-bar label{
    flex: 1;
    display: flex;
    align-items: center;
    padding-left: 39px;
}
.item-bar .bgroup .ico{
    width: 20px;
}
.info{
    height: 38px;
    padding: 1px 2px;
    margin-bottom: 4px;
    border: 1px solid #aaa;
    background: #fff;
    white-space: normal;
}
.treebox{
    height: 96px;
    border: 1px solid #aaa;
    background: #fff;
    overflow: hidden;
}
.tree{
    padding: 0 0 0 6px;
    font: bold 8px/12px "DejaVu Sans Condensed", "Noto Sans", sans-serif;
    color: #111;
    white-space: nowrap;
    overflow: hidden;
}
.tree ul{
    padding-left: 12px;
}
.tree ul li{
    position: relative;
}
.tree ul li::before{
    content: "";
    position: absolute;
    left: -8px;
    top: -2px;
    width: 8px;
    height: 8px;
    border: solid #bbb;
    border-width: 0 0 1px 1px;
}
.tree svg{
    width: 12px;
    height: 10px;
    margin: 1px 1px 0 0;
    vertical-align: top;
}
.tree .m{
    width: 8px;
    height: 8px;
    margin: 2px 0 0;
}
.tree .leaf{
    padding-left: 8px;
}
.tree .leaf::before{
    width: 14px;
}
.sel{
    background: #0a6cd6;
    color: #fff;
    outline: 1px dotted #fff;
}
.scroll{
    display: grid;
    grid-template: 1fr 12px / 1fr 12px;
}
.scroll .vbar i{
    height: 48px;
    margin: 0 0 auto;
}
.scroll .vbar .up{
    margin-bottom: 5px;
}
.scroll .hbar i{
    width: 138px;
    margin: 0 auto 0 5px;
}

/* 3D view */
.view{
    flex: 1;
    min-width: 0;
    position: relative;
    overflow: hidden;
    border-right: 2px solid #8c8c8c;
    background: linear-gradient(#648cec, #7ba0f0 20%, #8eaff6 37%, #b0cffb 67%, #cdebff);
}
.scene{
    display: block;
    width: 100%;
    height: 100%;
}
.viewcube{
    position: absolute;
    top: 28px;
    right: 11px;
}
.viewcube text{
    font-size: 7px;
    text-anchor: middle;
    fill: #6f8bd2;
}
.viewcube .dirs text{
    font-size: 11px;
    font-weight: bold;
    fill: #a9bff5;
    stroke: #7d97dc;
    stroke-width: .5px;
}
.navbar{
    position: absolute;
    top: 128px;
    right: 0;
}
.coords{
    position: absolute;
    left: 18px;
    bottom: 17px;
    padding: 0 2px;
    border: 1px solid #b06a66;
    font: bold 9px/13px "DejaVu Sans Condensed", sans-serif;
    color: #fff;
    background: rgba(190, 150, 150, .7);
}

/* group clashes dialog */
.dialog{
    position: absolute;
    left: 161px;
    top: 83px;
    width: 482px;
    height: 484px;
    display: flex;
    flex-direction: column;
    border: 2px solid #5f6a72;
    background: #f0f0f0;
    font: 8px/10px "DejaVu Sans Condensed", sans-serif;
    color: #222;
}
.dlg-title{
    flex: none;
    display: flex;
    align-items: center;
    justify-content: space-between;
    height: 14px;
    padding: 0 4px;
    border-bottom: 1px solid #889;
    background: #bcd8f5;
}
.dlg-title button{
    border: 0;
    background: none;
}
.dlg-body{
    flex: 1;
    padding: 9px 6px 0;
}
.dlg-top{
    display: flex;
    gap: 6px;
    margin-bottom: 5px;
}
.testlist{
    width: 308px;
    height: 265px;
    margin-top: 3px;
    padding: 3px 5px;
    border: 1px solid #999;
    background: #fff;
}
.dialog label{
    display: flex;
    align-items: center;
}
.testlist input[type=checkbox]{
    margin-right: 8px;
}
.by-row{
    display: flex;
    align-items: center;
    height: 15px;
    margin: 2px 0 11px;
}
.by-row select + select{
    margin-left: 5px;
}
.by-row select{
    height: 15px;
}
.s-layer{ width: 42px; }
.s-mech{ width: 62px; }
.s-sys{ width: 71px; }
.s-level{ width: 40px; }
.prio{
    display: flex;
    gap: 6px;
    margin-top: 3px;
}
.checks{
    display: flex;
    align-items: center;
    gap: 6px;
    height: 12px;
    margin-top: 2px;
}
.checks.tight{
    gap: 0;
    margin-top: 0;
}
p + .checks.tight{
    margin-top: 1px;
}
.checks input[type=checkbox]{
    width: 11px;
}
.custom{
    width: 112px;
    height: 11px;
    border: 1px solid #bbb;
    background: #fff;
}
.sp{
    margin-top: 5px;
}
hr{
    margin: 5px 0 7px;
    border: 0;
    border-top: 1px solid #999;
}
.dlg-bottom{
    display: flex;
    justify-content: space-between;
}
dl{
    display: grid;
    grid-template-columns: max-content auto;
    column-gap: 6px;
    padding-left: 18px;
}
.go{
    width: 95px;
    height: 39px;
    margin-top: 22px;
    border: 1px solid #7b93ab;
    border-radius: 2px;
    background: linear-gradient(#d3e9fd, #a6cff8);
}

/* status bar */
footer{
    height: 24px;
    padding: 1px 5px 0 7px;
    display: flex;
    align-items: center;
    gap: 4px;
    font-family: Roboto, sans-serif;
    background: #a0a0a0;
    color: #1c1c1c;
}
.saved{
    flex: 1;
}
.fsep{
    width: 1px;
    height: 18px;
    background: #777;
}
.n + .fsep{
    margin-left: 3px;
}
.meter + .meter{
    margin-left: -1px;
}
.mem{
    margin-left: 2px;
}
```
